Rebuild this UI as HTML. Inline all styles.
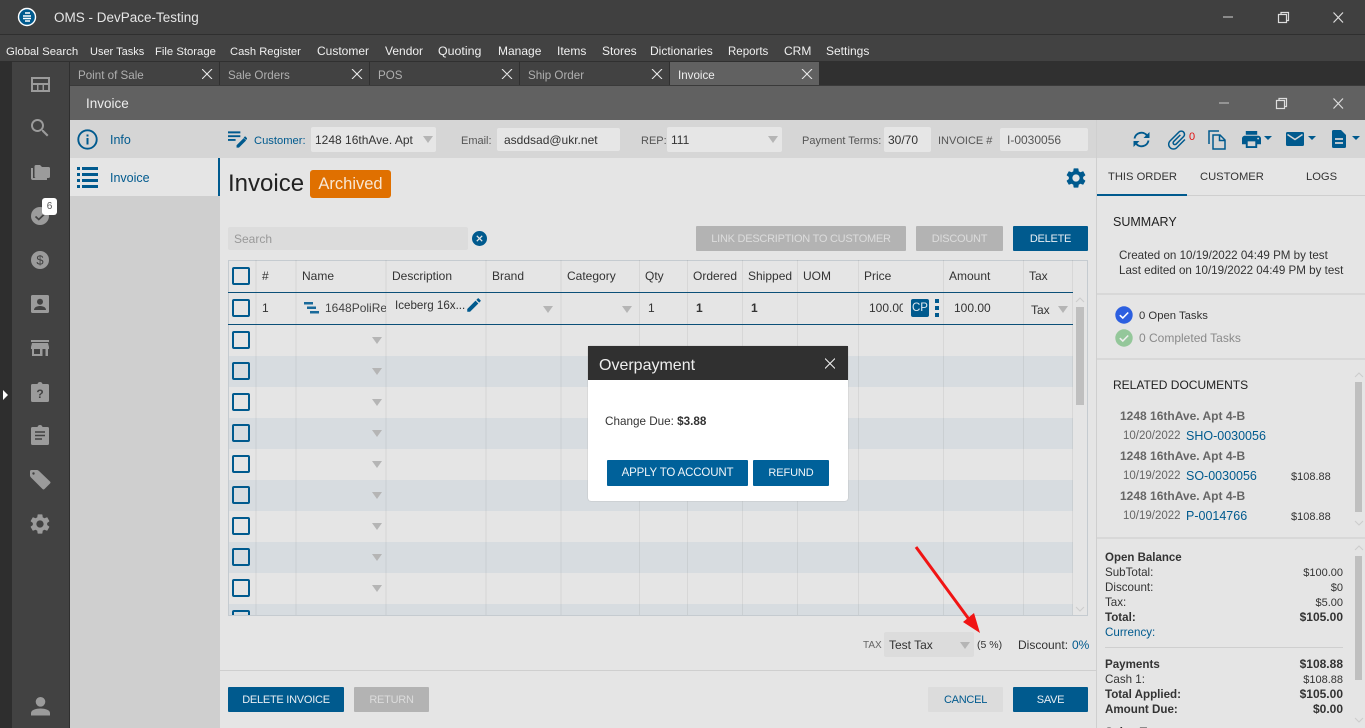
<!DOCTYPE html>
<html><head><meta charset="utf-8"><title>OMS</title>
<style>
html,body{margin:0;padding:0;width:1365px;height:728px;overflow:hidden;background:#e5e5e5}
body{font-family:"Liberation Sans",sans-serif;font-size:12px;color:#333;position:relative}
.a,.t,.tri,.cb,.l{position:absolute}
.t{white-space:nowrap;line-height:16px}
.tri{width:0;height:0;border-left:5px solid transparent;border-right:5px solid transparent;border-top:7px solid #b5b5b5}
.cb{left:232px;width:14px;height:14px;border:2px solid #005a8e;border-radius:2px}
.l{width:1px;top:260px;height:355px;background:rgba(0,0,0,.06)}
.lw{width:2px;background:rgba(0,0,0,.03)}
.btn{position:absolute;text-align:center;line-height:26px;height:25px;font-size:11px;letter-spacing:-.25px;color:#e8eef3;background:#005a8e;border-radius:1px}
.off{background:#b3b3b3;color:#dcdcdc}
.f{position:absolute;background:#e6e6e6;border-radius:2px}
.b{font-weight:bold}
.r{right:22px;text-align:right}
.d{color:#666;font-size:11.5px}
.k{color:#005a8e}
.s{font-size:11.6px;margin-top:1px}
.lab{font-size:11px;color:#555;margin-top:1px}
.hd{font-size:11.2px;color:#333;margin-top:1px}
.v{font-size:11px;margin-top:1px}
svg{position:absolute;display:block}
</style></head><body>
<!-- title + menu -->
<div class="a" style="left:0;top:0;width:1365px;height:34px;background:#404040"></div>
<div class="a" style="left:0;top:34px;width:1365px;height:1px;background:#2f2f2f"></div>
<div class="a" style="left:0;top:35px;width:1365px;height:26px;background:#424242"></div>
<div class="a" style="left:0;top:61px;width:1365px;height:25px;background:#303030"></div>
<svg style="left:17px;top:7px" width="20" height="20" viewBox="0 0 20 20"><circle cx="10" cy="10" r="8.500" fill="#005a8e" stroke="#fff" stroke-width="1.400"/><path d="M8 6h5M6 9h8M6 11.500h8M8 14h5" stroke="#fff" stroke-width="1.400"/></svg>
<div class="t" style="left:54px;top:10px;font-size:13.500px;color:#e6e6e6">OMS - DevPace-Testing</div>
<svg style="left:1220px;top:10px" width="130" height="16" viewBox="0 0 130 16" fill="none" stroke="#ddd" stroke-width="1.200"><path d="M3 7h10" stroke="#aaa" stroke-width="1.400"/><rect x="58.500" y="4.500" width="8" height="8"/><path d="M61 4.500V2.500h7.500v8h-2"/><path d="M113.500 2.500l9.500 10M123 2.500l-9.500 10"/></svg>
<div style="color:#f0f0f0">
<div class="t" style="left:6px;top:44px;font-size:11.400px">Global Search</div>
<div class="t" style="left:90px;top:44px;font-size:11px">User Tasks</div>
<div class="t" style="left:155px;top:44px;font-size:11.300px">File Storage</div>
<div class="t" style="left:230px;top:44px;font-size:11.200px">Cash Register</div>
<div class="t" style="left:317px;top:43px">Customer</div>
<div class="t" style="left:385px;top:43px">Vendor</div>
<div class="t" style="left:438px;top:43px;font-size:12.400px">Quoting</div>
<div class="t" style="left:498px;top:43px">Manage</div>
<div class="t" style="left:557px;top:43px">Items</div>
<div class="t" style="left:602px;top:43px">Stores</div>
<div class="t" style="left:650px;top:43px">Dictionaries</div>
<div class="t" style="left:728px;top:44px;font-size:11.500px">Reports</div>
<div class="t" style="left:784px;top:43px">CRM</div>
<div class="t" style="left:826px;top:43px">Settings</div>
</div>
<!-- tabs -->
<div class="a" style="left:70px;top:62px;width:149px;height:23px;background:#424242"></div>
<div class="a" style="left:220px;top:62px;width:149px;height:23px;background:#424242"></div>
<div class="a" style="left:370px;top:62px;width:149px;height:23px;background:#424242"></div>
<div class="a" style="left:520px;top:62px;width:149px;height:23px;background:#424242"></div>
<div class="a" style="left:670px;top:62px;width:149px;height:23px;background:#616161"></div>
<div class="t s" style="left:78px;top:67px;color:#b0b0b0">Point of Sale</div>
<div class="t s" style="left:228px;top:67px;color:#b0b0b0">Sale Orders</div>
<div class="t s" style="left:378px;top:67px;color:#b0b0b0">POS</div>
<div class="t s" style="left:528px;top:67px;color:#b0b0b0">Ship Order</div>
<div class="t s" style="left:678px;top:67px;color:#eee">Invoice</div>
<svg style="left:202px;top:69px" width="612" height="10" viewBox="0 0 612 10" fill="none" stroke="#e6e6e6" stroke-width="1.100"><path d="M0 0l10 10M10 0L0 10M150 0l10 10M160 0l-10 10M300 0l10 10M310 0l-10 10M450 0l10 10M460 0l-10 10M600 0l10 10M610 0l-10 10"/></svg>
<!-- rail -->
<div class="a" style="left:0;top:61px;width:12px;height:667px;background:#2e2e2e"></div>
<div class="a" style="left:12px;top:62px;width:57px;height:666px;background:#424242"></div>
<div class="a" style="left:69px;top:62px;width:1px;height:666px;background:#2f2f2f"></div>
<div class="a" style="left:3px;top:390px;width:0;height:0;border-left:5px solid #fff;border-top:5px solid transparent;border-bottom:5px solid transparent"></div>
<svg style="left:31px;top:77px" width="19" height="15" viewBox="0 0 19 15" fill="#9b9b9b"><path d="M0 0h19v15H0zM2 2v4h15V2zM2 8v5h4V8zM7.500 8v5h4V8zM13 8v5h4V8z" fill-rule="evenodd"/></svg>
<svg style="left:28px;top:115px" width="24" height="26" viewBox="0 0 24 24" fill="#9b9b9b"><path d="M15.500 14h-.79l-.28-.27C15.410 12.590 16 11.110 16 9.500 16 5.910 13.090 3 9.500 3S3 5.910 3 9.500 5.910 16 9.500 16c1.610 0 3.090-.59 4.230-1.570l.27.28v.79l5 4.990L20.490 19l-4.990-5zm-6 0C7.010 14 5 11.990 5 9.500S7.010 5 9.500 5 14 7.010 14 9.500 11.990 14 9.500 14z"/></svg>
<svg style="left:31px;top:165px" width="19" height="15" viewBox="0 0 19 15" fill="#9b9b9b"><path d="M0 3h2v10h14v2H2Q0 15 0 13z"/><path d="M3.500 1.500Q3.500 0 5 0H9l2 2h6.500Q19 2 19 3.500v8q0 1.500-1.500 1.500H5q-1.500 0-1.500-1.500z"/></svg>
<svg style="left:31px;top:207px" width="18" height="18" viewBox="0 0 18 18"><circle cx="9" cy="9" r="9" fill="#9b9b9b"/><path d="M4.500 9.500L7.800 12.500 13.500 7" stroke="#424242" stroke-width="1.700" fill="none"/></svg>
<div class="a" style="left:42px;top:198px;width:15px;height:17px;background:#fff;border-radius:3px;text-align:center;font-size:10px;line-height:17px;color:#555">6</div>
<svg style="left:31px;top:251px" width="18" height="18" viewBox="0 0 18 18"><circle cx="9" cy="9" r="9" fill="#9b9b9b"/><text x="9" y="13.500" text-anchor="middle" font-size="13" font-family="Liberation Sans" fill="#424242">$</text></svg>
<svg style="left:31px;top:295px" width="18" height="18" viewBox="0 0 18 18"><rect width="18" height="18" rx="1.500" fill="#9b9b9b"/><circle cx="9" cy="6.800" r="3" fill="#424242"/><path d="M3 15c0-3 3.500-4 6-4s6 1 6 4z" fill="#424242"/></svg>
<svg style="left:31px;top:340px" width="18" height="16" viewBox="0 0 18 16" fill="#9b9b9b"><path d="M0 0h18v2H0zM1 3h16l1 4v2h-1v7h-2.500V9h-3v7H1V9H0V7zM3 9v5h6V9z" fill-rule="evenodd"/></svg>
<svg style="left:31px;top:382px" width="18" height="20" viewBox="0 0 18 20"><path d="M1.500 2H6.500Q7 0 9 0t2.500 2h5Q18 2 18 3.500v15q0 1.500-1.500 1.500h-15Q0 20 0 18.500v-15Q0 2 1.500 2z" fill="#9b9b9b"/><text x="9" y="16" text-anchor="middle" font-size="12" font-weight="bold" font-family="Liberation Sans" fill="#424242">?</text></svg>
<svg style="left:31px;top:425px" width="18" height="20" viewBox="0 0 18 20"><path d="M1.500 2H6.500Q7 0 9 0t2.500 2h5Q18 2 18 3.500v15q0 1.500-1.500 1.500h-15Q0 20 0 18.500v-15Q0 2 1.500 2z" fill="#9b9b9b"/><path d="M4 7h10M4 10.500h10M4 14h7" stroke="#424242" stroke-width="1.600"/></svg>
<svg style="left:30px;top:470px" width="21" height="20" viewBox="0 0 21 20"><path d="M1.500 0H7Q8 0 9 1l11 10.500q1 1 0 2L14.500 19q-1 1-2 0L1 7.500Q0 6.500 0 5.500V1.500Q0 0 1.500 0z" fill="#9b9b9b"/><circle cx="3.500" cy="3.500" r="1.200" fill="#424242"/></svg>
<svg style="left:28px;top:512px" width="24" height="24" viewBox="0 0 24 24" fill="#9b9b9b"><path d="M19.140 12.940c.04-.3.06-.61.06-.94 0-.32-.02-.64-.07-.94l2.030-1.580c.18-.14.23-.41.12-.61l-1.920-3.320c-.12-.22-.37-.29-.59-.22l-2.390.96c-.5-.38-1.030-.7-1.620-.94l-.36-2.540c-.04-.24-.24-.41-.48-.41h-3.840c-.24 0-.43.17-.47.41l-.36 2.540c-.59.24-1.130.57-1.620.94l-2.390-.96c-.22-.08-.47 0-.59.22L2.740 8.870c-.12.21-.08.47.12.61l2.030 1.580c-.05.3-.09.63-.09.94s.02.64.07.94l-2.030 1.580c-.18.14-.23.41-.12.61l1.920 3.320c.12.22.37.29.59.22l2.390-.96c.5.38 1.030.7 1.620.94l.36 2.540c.05.24.24.41.48.41h3.840c.24 0 .44-.17.47-.41l.36-2.540c.59-.24 1.130-.56 1.620-.94l2.390.96c.22.08.47 0 .59-.22l1.920-3.320c.12-.22.07-.47-.12-.61l-2.010-1.580zM12 15.600c-1.980 0-3.600-1.620-3.600-3.600s1.620-3.600 3.600-3.600 3.600 1.620 3.600 3.600-1.620 3.600-3.600 3.600z"/></svg>
<svg style="left:31px;top:697px" width="19" height="19" viewBox="0 0 19 19" fill="#9b9b9b"><circle cx="9.500" cy="4.800" r="4.800"/><path d="M0 18.500v-2.500c0-3 5-4.500 9.500-4.500s9.500 1.500 9.500 4.500v2.500z"/></svg>
<!-- window header -->
<div class="a" style="left:70px;top:85px;width:1295px;height:1px;background:#3a3a3a"></div>
<div class="a" style="left:70px;top:86px;width:1295px;height:34px;background:#616161"></div>
<div class="t" style="left:86px;top:96px;font-size:13.500px;color:#eee">Invoice</div>
<svg style="left:1215px;top:96px" width="135" height="16" viewBox="0 0 135 16" fill="none" stroke="#ddd" stroke-width="1.200"><path d="M4 7h10" stroke="#aaa" stroke-width="1.400"/><rect x="61.500" y="4.500" width="8" height="8"/><path d="M64 4.500V2.500h7.500v8h-2"/><path d="M118.500 2.500l9.500 10M128 2.500l-9.500 10"/></svg>
<!-- left nav -->
<div class="a" style="left:70px;top:120px;width:150px;height:608px;background:#cfcfcf"></div>
<div class="a" style="left:70px;top:120px;width:150px;height:38px;background:#d5d5d5"></div>
<div class="a" style="left:70px;top:158px;width:148px;height:38px;background:#e5e5e5"></div>
<div class="a" style="left:218px;top:158px;width:2px;height:38px;background:#005a8e"></div>
<svg style="left:77px;top:129px" width="21" height="21" viewBox="0 0 21 21"><circle cx="10.500" cy="10.500" r="9.200" fill="none" stroke="#005a8e" stroke-width="1.900"/><path d="M9.500 9h2v6.500h-2zM9.500 5.500h2v2h-2z" fill="#005a8e"/></svg>
<svg style="left:77px;top:167px" width="21" height="21" viewBox="0 0 21 21" fill="#005a8e"><path d="M0 0h3v3H0zM5 0h16v3H5zM0 6h3v3H0zM5 6h16v3H5zM0 12h3v3H0zM5 12h16v3H5zM0 18h3v3H0zM5 18h16v3H5z"/></svg>
<div class="t k" style="left:110px;top:132px;font-size:12.500px">Info</div>
<div class="t k" style="left:110px;top:170px;font-size:12.500px">Invoice</div>
<!-- top bar -->
<div class="a" style="left:220px;top:120px;width:876px;height:38px;background:#d6d6d6"></div>
<svg style="left:228px;top:131px" width="19" height="17" viewBox="0 0 20 17" fill="#005a8e"><path d="M0 0h13v2H0zM0 4h13v2H0zM0 8h8v2H0z"/><path d="M9 14.500V17h2.500L19 9.500 16.500 7zM16.500 6.500L19 9l1-1q.5-.5 0-1l-1.500-1.500q-.5-.5-1 0z"/></svg>
<div class="t k" style="left:254px;top:133px;font-size:11.200px">Customer:</div>
<div class="f" style="left:311px;top:127px;width:125px;height:25px"></div>
<div class="t" style="left:315px;top:132px">1248 16thAve. Apt</div>
<div class="tri" style="left:423px;top:136px"></div>
<div class="t lab" style="left:461px;top:132px">Email:</div>
<div class="f" style="left:497px;top:128px;width:123px;height:23px"></div>
<div class="t" style="left:504px;top:132px">asddsad@ukr.net</div>
<div class="t lab" style="left:641px;top:132px">REP:</div>
<div class="f" style="left:667px;top:127px;width:115px;height:25px"></div>
<div class="t" style="left:671px;top:132px">111</div>
<div class="tri" style="left:768px;top:136px"></div>
<div class="t lab" style="left:802px;top:132px">Payment Terms:</div>
<div class="f" style="left:884px;top:127px;width:47px;height:25px"></div>
<div class="t" style="left:888px;top:132px">30/70</div>
<div class="t lab" style="left:938px;top:132px">INVOICE #</div>
<div class="f" style="left:1000px;top:128px;width:88px;height:23px"></div>
<div class="t" style="left:1007px;top:132px;color:#555">I-0030056</div>
<!-- heading -->
<div class="t" style="left:228px;top:170px;font-size:24px;line-height:28px;color:#222">Invoice</div>
<div class="a" style="left:310px;top:170px;width:81px;height:28px;background:#e07000;border-radius:3px;color:#f8e6d2;font-size:16.500px;line-height:28px;text-align:center">Archived</div>
<svg style="left:1064px;top:166px" width="24" height="24" viewBox="0 0 24 24" fill="#005a8e"><path d="M19.140 12.940c.04-.3.06-.61.06-.94 0-.32-.02-.64-.07-.94l2.030-1.580c.18-.14.23-.41.12-.61l-1.920-3.320c-.12-.22-.37-.29-.59-.22l-2.390.96c-.5-.38-1.030-.7-1.620-.94l-.36-2.540c-.04-.24-.24-.41-.48-.41h-3.840c-.24 0-.43.17-.47.41l-.36 2.540c-.59.24-1.130.57-1.620.94l-2.390-.96c-.22-.08-.47 0-.59.22L2.740 8.870c-.12.21-.08.47.12.61l2.030 1.580c-.05.3-.09.63-.09.94s.02.64.07.94l-2.030 1.580c-.18.14-.23.41-.12.61l1.920 3.320c.12.22.37.29.59.22l2.390-.96c.5.38 1.030.7 1.620.94l.36 2.540c.05.24.24.41.48.41h3.840c.24 0 .44-.17.47-.41l.36-2.540c.59-.24 1.130-.56 1.620-.94l2.390.96c.22.08.47 0 .59-.22l1.920-3.320c.12-.22.07-.47-.12-.61l-2.010-1.580zM12 15.600c-1.980 0-3.600-1.620-3.600-3.600s1.620-3.600 3.600-3.600 3.600 1.620 3.600 3.600-1.620 3.600-3.600 3.600z"/></svg>
<!-- search row -->
<div class="a" style="left:228px;top:227px;width:240px;height:23px;background:#dcdcdc;border-radius:2px"></div>
<div class="t" style="left:234px;top:231px;color:#999">Search</div>
<svg style="left:472px;top:231px" width="15" height="15" viewBox="0 0 15 15"><circle cx="7.500" cy="7.500" r="7.500" fill="#005a8e"/><path d="M4.800 4.800l5.400 5.400M10.200 4.800l-5.400 5.400" stroke="#e5e5e5" stroke-width="1.300"/></svg>
<div class="btn off" style="left:696px;top:226px;width:210px">LINK DESCRIPTION TO CUSTOMER</div>
<div class="btn off" style="left:916px;top:226px;width:87px">DISCOUNT</div>
<div class="btn" style="left:1013px;top:226px;width:75px">DELETE</div>
<!-- table -->
<div class="a" style="left:228px;top:260px;width:860px;height:355px;background:#e5e5e5"></div>
<div class="a" style="left:229px;top:356px;width:844px;height:31px;background:#d7dce0"></div>
<div class="a" style="left:229px;top:418px;width:844px;height:31px;background:#d7dce0"></div>
<div class="a" style="left:229px;top:480px;width:844px;height:31px;background:#d7dce0"></div>
<div class="a" style="left:229px;top:542px;width:844px;height:31px;background:#d7dce0"></div>
<div class="a" style="left:229px;top:604px;width:844px;height:11px;background:#d7dce0"></div>
<div class="a" style="left:228px;top:260px;width:859px;height:1px;background:#c5cbd0"></div>
<div class="a" style="left:228px;top:615px;width:860px;height:1px;background:#c5cbd0"></div>
<div class="a" style="left:228px;top:260px;width:1px;height:355px;background:#c5cbd0"></div>
<div class="a" style="left:1087px;top:260px;width:1px;height:355px;background:#c5cbd0"></div>
<div class="l lw" style="left:255px"></div><div class="l lw" style="left:295px"></div><div class="l lw" style="left:385px"></div><div class="l lw" style="left:485px"></div><div class="l lw" style="left:560px"></div><div class="l" style="left:639px"></div><div class="l" style="left:687px"></div><div class="l" style="left:742px"></div><div class="l" style="left:797px"></div><div class="l" style="left:858px"></div><div class="l" style="left:943px"></div><div class="l" style="left:1023px"></div><div class="l" style="left:1072px"></div>
<div class="a" style="left:228px;top:292px;width:845px;height:1px;background:#0b4f78"></div>
<div class="a" style="left:228px;top:324px;width:845px;height:1px;background:#0b4f78"></div>
<div class="a" style="left:1076px;top:307px;width:8px;height:98px;background:#bfbfbf"></div>
<svg style="left:1075px;top:297px" width="10" height="6" viewBox="0 0 10 6" fill="none" stroke="#ccc"><path d="M1 5l4-4 4 4"/></svg>
<svg style="left:1075px;top:606px" width="10" height="6" viewBox="0 0 10 6" fill="none" stroke="#ccc"><path d="M1 1l4 4 4-4"/></svg>
<div class="cb" style="top:267px"></div><div class="cb" style="top:299px"></div><div class="cb" style="top:331px"></div><div class="cb" style="top:362px"></div><div class="cb" style="top:393px"></div><div class="cb" style="top:424px"></div><div class="cb" style="top:455px"></div><div class="cb" style="top:486px"></div><div class="cb" style="top:517px"></div><div class="cb" style="top:548px"></div><div class="cb" style="top:579px"></div>
<div class="a" style="left:232px;top:610px;width:18px;height:5px;overflow:hidden"><div class="cb" style="left:0;top:0"></div></div>
<div class="tri" style="left:372px;top:337px"></div><div class="tri" style="left:372px;top:368px"></div><div class="tri" style="left:372px;top:399px"></div><div class="tri" style="left:372px;top:430px"></div><div class="tri" style="left:372px;top:461px"></div><div class="tri" style="left:372px;top:492px"></div><div class="tri" style="left:372px;top:523px"></div><div class="tri" style="left:372px;top:554px"></div><div class="tri" style="left:372px;top:585px"></div>
<div style="color:#333">
<div class="t" style="left:262px;top:268px">#</div>
<div class="t" style="left:302px;top:268px">Name</div>
<div class="t" style="left:392px;top:268px">Description</div>
<div class="t" style="left:492px;top:268px">Brand</div>
<div class="t" style="left:567px;top:268px">Category</div>
<div class="t" style="left:645px;top:268px">Qty</div>
<div class="t" style="left:693px;top:268px">Ordered</div>
<div class="t" style="left:748px;top:268px">Shipped</div>
<div class="t" style="left:803px;top:268px">UOM</div>
<div class="t" style="left:864px;top:268px">Price</div>
<div class="t" style="left:949px;top:268px">Amount</div>
<div class="t" style="left:1029px;top:268px">Tax</div>
<div class="t" style="left:262px;top:300px">1</div>
<svg style="left:304px;top:302px" width="16" height="12" viewBox="0 0 16 12" fill="#1a6a9a"><path d="M0 0h9v2.500H0zM3 4.500h9V7H3zM6 9h9v2.500H6z"/></svg>
<div class="t" style="left:325px;top:300px;width:61px;overflow:hidden;color:#444">1648PoliRec</div>
<div class="t" style="left:395px;top:298px;font-size:11.600px">Iceberg 16x...</div>
<svg style="left:465px;top:296px" width="18" height="18" viewBox="0 0 24 24" fill="#005a8e"><path d="M3 17.250V21h3.750L17.810 9.940l-3.750-3.750L3 17.250zM20.710 7.040c.39-.39.39-1.020 0-1.410l-2.340-2.340c-.39-.39-1.020-.39-1.410 0l-1.830 1.830 3.750 3.750 1.830-1.830z"/></svg>
<div class="tri" style="left:543px;top:306px"></div>
<div class="tri" style="left:622px;top:306px"></div>
<div class="t" style="left:648px;top:300px">1</div>
<div class="t b" style="left:696px;top:300px">1</div>
<div class="t b" style="left:751px;top:300px">1</div>
<div class="t" style="left:869px;top:300px;width:34px;overflow:hidden">100.00</div>
<div class="a" style="left:911px;top:299px;width:18px;height:18px;background:#005a8e;border-radius:2px;color:#dfe9f0;text-align:center;line-height:18px;font-size:11.500px">CP</div>
<div class="a" style="left:935px;top:299px;width:4px;height:4px;background:#005a8e"></div><div class="a" style="left:935px;top:306px;width:4px;height:4px;background:#005a8e"></div><div class="a" style="left:935px;top:313px;width:4px;height:4px;background:#005a8e"></div>
<div class="t" style="left:954px;top:300px">100.00</div>
<div class="t" style="left:1031px;top:302px">Tax</div>
<div class="tri" style="left:1058px;top:306px"></div>
</div>
<!-- footer -->
<div class="t" style="left:863px;top:638px;font-size:10px;color:#666">TAX</div>
<div class="a" style="left:884px;top:632px;width:90px;height:25px;background:#dcdcdc;border-radius:2px"></div>
<div class="t" style="left:889px;top:637px">Test Tax</div>
<div class="tri" style="left:960px;top:642px"></div>
<div class="t" style="left:977px;top:637px;font-size:10.500px">(5 %)</div>
<div class="t" style="left:1018px;top:637px">Discount:</div>
<div class="t k" style="left:1072px;top:637px">0%</div>
<div class="a" style="left:220px;top:670px;width:876px;height:1px;background:#cfcfcf"></div>
<div class="btn" style="left:228px;top:687px;width:116px">DELETE INVOICE</div>
<div class="btn off" style="left:354px;top:687px;width:75px">RETURN</div>
<div class="btn" style="left:928px;top:687px;width:75px;background:#dcdcdc;color:#005a8e">CANCEL</div>
<div class="btn" style="left:1013px;top:687px;width:75px">SAVE</div>
<!-- right panel -->
<div class="a" style="left:1096px;top:120px;width:1px;height:608px;background:#cfcfcf"></div>
<div class="a" style="left:1097px;top:120px;width:268px;height:38px;background:#d6d6d6"></div>
<svg style="left:1132px;top:130px" width="19" height="19" viewBox="0 0 19 19" fill="none" stroke="#005a8e" stroke-width="1.900"><path d="M2.500 8.500A7 7 0 0 1 15 5.500"/><path d="M16.500 10.500A7 7 0 0 1 4 13.500"/><path d="M17.500 2v6h-6z" fill="#005a8e" stroke="none"/><path d="M1.500 17v-6h6z" fill="#005a8e" stroke="none"/></svg>
<svg style="left:1165px;top:128px" width="24" height="24" viewBox="0 0 24 24" fill="#005a8e"><g transform="rotate(45 12 12)"><path d="M16.500 6v11.500c0 2.210-1.790 4-4 4s-4-1.790-4-4V5c0-1.380 1.120-2.500 2.500-2.500s2.500 1.120 2.500 2.500v10.500c0 .55-.45 1-1 1s-1-.45-1-1V6H10v9.500c0 1.380 1.120 2.500 2.500 2.500s2.500-1.120 2.500-2.500V5c0-2.210-1.790-4-4-4S7 2.790 7 5v12.500c0 3.040 2.460 5.500 5.500 5.500s5.500-2.460 5.500-5.500V6h-1.500z"/></g></svg>
<div class="t" style="left:1189px;top:129px;font-size:11px;color:#e01010">0</div>
<svg style="left:1208px;top:130px" width="18" height="20" viewBox="0 0 18 20" fill="none" stroke="#005a8e" stroke-width="1.500"><path d="M1 14V1h10"/><path d="M5 5h7l5 5v9H5zM11.500 5v5.500H17"/></svg>
<svg style="left:1242px;top:131px" width="19" height="17" viewBox="2 3 20 18" fill="#005a8e" preserveAspectRatio="none"><path d="M19 8H5c-1.660 0-3 1.340-3 3v6h4v4h12v-4h4v-6c0-1.660-1.340-3-3-3zm-3 11H8v-5h8v5zm3-7c-.55 0-1-.45-1-1s.45-1 1-1 1 .45 1 1-.45 1-1 1zm-1-9H6v4h12V3z"/></svg>
<div class="tri" style="left:1264px;top:136px;border-left-width:4px;border-right-width:4px;border-top:4px solid #005a8e"></div>
<svg style="left:1286px;top:132px" width="18" height="14" viewBox="0 0 18 14"><rect width="18" height="14" rx="1.500" fill="#005a8e"/><path d="M1.500 2.500L9 7.500l7.500-5" stroke="#d6d6d6" stroke-width="1.500" fill="none"/></svg>
<div class="tri" style="left:1308px;top:136px;border-left-width:4px;border-right-width:4px;border-top:4px solid #005a8e"></div>
<svg style="left:1332px;top:130px" width="14" height="18" viewBox="0 0 14 18" fill="#005a8e"><path d="M1.500 0H9l5 5v11.500q0 1.500-1.500 1.500h-11Q0 18 0 16.500v-15Q0 0 1.500 0z"/><path d="M3 9h8M3 13h8" stroke="#d6d6d6" stroke-width="1.700"/></svg>
<div class="tri" style="left:1352px;top:136px;border-left-width:4px;border-right-width:4px;border-top:4px solid #005a8e"></div>
<div class="a" style="left:1097px;top:195px;width:268px;height:1px;background:#cfcfcf"></div>
<div class="a" style="left:1097px;top:194px;width:90px;height:2px;background:#005a8e"></div>
<div class="t hd" style="left:1108px;top:168px">THIS ORDER</div>
<div class="t hd" style="left:1200px;top:168px">CUSTOMER</div>
<div class="t hd" style="left:1306px;top:168px">LOGS</div>
<div class="t" style="left:1113px;top:214px;font-size:12.500px;color:#222">SUMMARY</div>
<div class="t s" style="left:1119px;top:247px">Created on 10/19/2022 04:49 PM by test</div>
<div class="t s" style="left:1119px;top:262px">Last edited on 10/19/2022 04:49 PM by test</div>
<div class="a" style="left:1097px;top:293px;width:268px;height:2px;background:#d8d8d8"></div>
<svg style="left:1115px;top:306px" width="18" height="18" viewBox="0 0 18 18"><circle cx="9" cy="9" r="8.700" fill="#2c5fe0"/><path d="M4.800 9.200L7.800 12 13.200 6.500" stroke="#fff" stroke-width="1.600" fill="none"/></svg>
<div class="t" style="left:1139px;top:308px;font-size:11.300px">0 Open Tasks</div>
<svg style="left:1115px;top:329px" width="18" height="18" viewBox="0 0 18 18"><circle cx="9" cy="9" r="8.700" fill="#94c79a"/><path d="M4.800 9.200L7.800 12 13.200 6.500" stroke="#eee" stroke-width="1.600" fill="none"/></svg>
<div class="t" style="left:1139px;top:330px;color:#8a8a8a">0 Completed Tasks</div>
<div class="a" style="left:1097px;top:358px;width:268px;height:2px;background:#d8d8d8"></div>
<div class="t" style="left:1113px;top:377px;font-size:12px;color:#222">RELATED DOCUMENTS</div>
<div class="t b" style="left:1120px;top:408px;color:#666">1248 16thAve. Apt 4-B</div>
<div class="t d" style="left:1123px;top:428px">10/20/2022</div>
<div class="t k" style="left:1186px;top:428px;font-size:12.500px">SHO-0030056</div>
<div class="t b" style="left:1120px;top:448px;color:#666">1248 16thAve. Apt 4-B</div>
<div class="t d" style="left:1123px;top:468px">10/19/2022</div>
<div class="t k" style="left:1186px;top:468px;font-size:12.500px">SO-0030056</div>
<div class="t v" style="left:1291px;top:468px">$108.88</div>
<div class="t b" style="left:1120px;top:488px;color:#666">1248 16thAve. Apt 4-B</div>
<div class="t d" style="left:1123px;top:508px">10/19/2022</div>
<div class="t k" style="left:1186px;top:508px;font-size:12.500px">P-0014766</div>
<div class="t v" style="left:1291px;top:508px">$108.88</div>
<div class="a" style="left:1355px;top:382px;width:7px;height:130px;background:#bfbfbf"></div>
<div class="a" style="left:1097px;top:537px;width:268px;height:2px;background:#d8d8d8"></div>
<div class="a" style="left:1355px;top:556px;width:7px;height:124px;background:#bfbfbf"></div>
<svg style="left:1354px;top:372px" width="10" height="6" viewBox="0 0 10 6" fill="none" stroke="#ccc"><path d="M1 5l4-4 4 4"/></svg>
<svg style="left:1354px;top:520px" width="10" height="6" viewBox="0 0 10 6" fill="none" stroke="#ccc"><path d="M1 1l4 4 4-4"/></svg>
<svg style="left:1354px;top:545px" width="10" height="6" viewBox="0 0 10 6" fill="none" stroke="#ccc"><path d="M1 5l4-4 4 4"/></svg>
<svg style="left:1354px;top:717px" width="10" height="6" viewBox="0 0 10 6" fill="none" stroke="#ccc"><path d="M1 1l4 4 4-4"/></svg>
<div class="t b" style="left:1105px;top:550px;font-size:11.500px">Open Balance</div>
<div class="t s" style="left:1105px;top:564px">SubTotal:</div><div class="t r v" style="top:564px">$100.00</div>
<div class="t s" style="left:1105px;top:579px">Discount:</div><div class="t r v" style="top:579px">$0</div>
<div class="t s" style="left:1105px;top:594px">Tax:</div><div class="t r v" style="top:594px">$5.00</div>
<div class="t b s" style="left:1105px;top:609px">Total:</div><div class="t b r" style="top:609px">$105.00</div>
<div class="t k s" style="left:1105px;top:624px">Currency:</div>
<div class="a" style="left:1105px;top:647px;width:238px;height:1px;background:#cfcfcf"></div>
<div class="t b s" style="left:1105px;top:656px">Payments</div><div class="t b r" style="top:656px">$108.88</div>
<div class="t s" style="left:1105px;top:671px">Cash 1:</div><div class="t r v" style="top:671px">$108.88</div>
<div class="t b s" style="left:1105px;top:686px">Total Applied:</div><div class="t b r" style="top:686px">$105.00</div>
<div class="t b s" style="left:1105px;top:701px">Amount Due:</div><div class="t b r" style="top:701px">$0.00</div>
<div class="t b" style="left:1105px;top:724px">Sales Tax</div>
<!-- arrow -->
<svg style="left:905px;top:540px" width="90" height="100" viewBox="0 0 90 100"><path d="M11 7L66 82" stroke="#f01414" stroke-width="3"/><path d="M75 93L58 82 69 73z" fill="#f01414"/></svg>
<!-- dialog -->
<div class="a" style="left:588px;top:346px;width:260px;height:155px;background:#fff;border-radius:2px 2px 3px 3px;box-shadow:0 0 1px #999"></div>
<div class="a" style="left:588px;top:346px;width:260px;height:34px;background:#303030"></div>
<div class="t" style="left:599px;top:357px;font-size:16px;line-height:18px;color:#eee">Overpayment</div>
<svg style="left:825px;top:358px" width="10" height="11" viewBox="0 0 10 11" fill="none" stroke="#eee" stroke-width="1.100"><path d="M0 .5l10 10M10 .5L0 10.500"/></svg>
<div class="t" style="left:605px;top:414px;font-size:11.700px">Change Due: <b>$3.88</b></div>
<div class="btn" style="left:607px;top:460px;width:141px;height:26px;line-height:27px;background:#00619a;color:#eef4f8;font-size:11.500px;letter-spacing:-.15px">APPLY TO ACCOUNT</div>
<div class="btn" style="left:753px;top:460px;width:76px;height:26px;line-height:27px;background:#00619a;color:#eef4f8;letter-spacing:-.1px">REFUND</div>
</body></html>
